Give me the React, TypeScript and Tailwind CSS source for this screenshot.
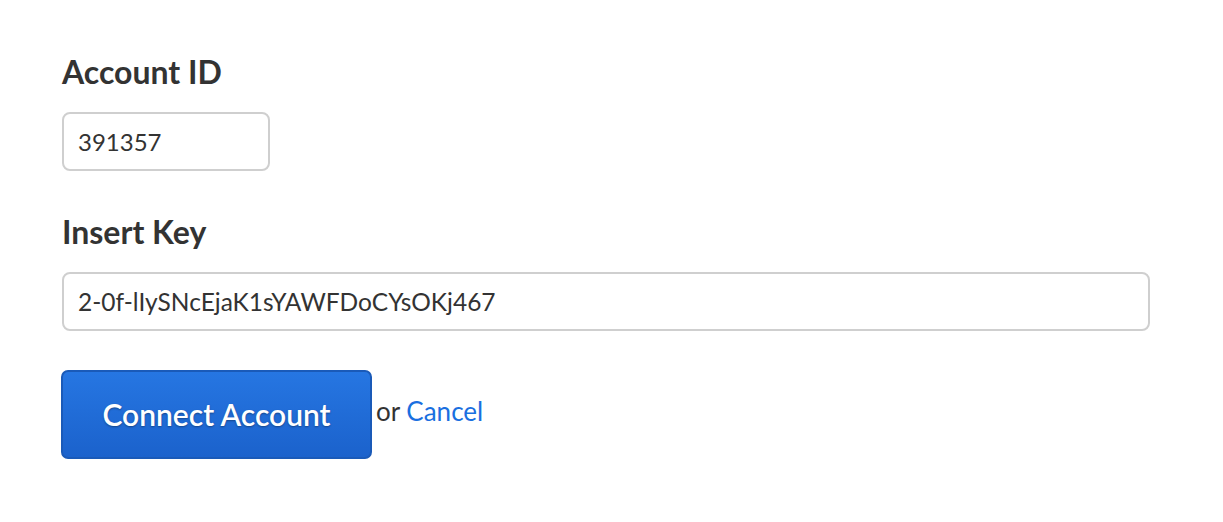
import React from "react";

export default function App() {
  return (
    <div
      className="w-[1223px] h-[522px] bg-white text-[#333333]"
      style={{ fontFamily: "Lato, 'Open Sans', sans-serif" }}
    >
      <div className="pl-[62px] pt-[52px] flex flex-col">
        <label className="text-[32px] font-bold leading-[40px] text-[#333]">Account ID</label>
        <input
          readOnly
          value="391357"
          className="mt-[20px] w-[208px] h-[59px] border-2 border-[#cfcfcf] rounded-[8px] px-[14px] text-[24px] text-[#333] bg-white outline-none"
          style={{ fontFamily: "Lato, sans-serif" }}
        />
        <label className="mt-[41px] text-[32px] font-bold leading-[40px] text-[#333]">Insert Key</label>
        <input
          readOnly
          value="2-0f-lIySNcEjaK1sYAWFDoCYsOKj467"
          className="mt-[20px] w-[1088px] h-[59px] border-2 border-[#cfcfcf] rounded-[8px] px-[14px] text-[24.5px] text-[#333] bg-white outline-none"
          style={{ fontFamily: "Lato, sans-serif" }}
        />
        <div className="mt-[39px] flex items-center">
          <button
            className="-ml-[1px] w-[311px] h-[89px] rounded-[7px] border-2 border-[#1a5ab8] bg-gradient-to-b from-[#2676e2] to-[#1b62cc] text-white text-[30px] font-semibold [text-shadow:0_1px_2px_rgba(0,0,0,0.35)]"
          >
            Connect Account
          </button>
          <span className="ml-[4px] text-[26px] text-[#333] -mt-[6px]">
            or <span className="text-[#1a6fe0]">Cancel</span>
          </span>
        </div>
      </div>
    </div>
  );
}
